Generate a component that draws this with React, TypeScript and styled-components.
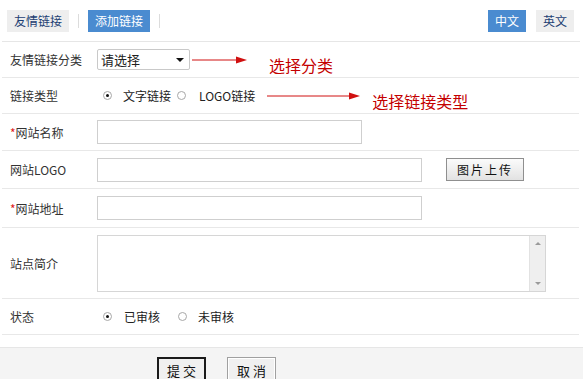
import React from 'react';
import styled, { createGlobalStyle } from 'styled-components';

const GlobalStyle = createGlobalStyle`
  html, body {
    margin: 0;
    padding: 0;
    background: #fff;
  }
  body {
    font-family: "Noto Sans CJK SC", "Liberation Sans", sans-serif;
    font-size: 12px;
    color: #333;
  }
`;

const Page = styled.div`
  width: 583px;
  height: 379px;
  overflow: hidden;
`;

const TopBar = styled.div`
  height: 41px;
  margin: 0 3px 0 2px;
  border-bottom: 1px solid #e6e6e6;
  display: flex;
  align-items: center;
  justify-content: space-between;
  padding: 0 5px;
`;

const TabGroup = styled.div`
  display: flex;
  align-items: center;
`;

const Tab = styled.div<{ $active?: boolean }>`
  height: 22px;
  line-height: 22px;
  padding: 0 7px;
  font-size: 12px;
  background: ${(p) => (p.$active ? '#4a8bd0' : '#eeeeee')};
  color: ${(p) => (p.$active ? '#fff' : '#1d3f73')};
`;

const Sep = styled.span`
  width: 1px;
  height: 14px;
  background: #dcdcdc;
  margin: 0 9px;
`;

const LangGroup = styled.div`
  display: flex;
  gap: 10px;
  margin-right: 1px;
`;

const Form = styled.div`
  margin: 0 4px 0 2px;
`;

const Row = styled.div<{ $h: number }>`
  height: ${(p) => p.$h}px;
  border-bottom: 1px solid #e8e8e8;
  display: flex;
  align-items: center;
`;

const Label = styled.div`
  width: 95px;
  padding-left: 8px;
  box-sizing: border-box;
  flex-shrink: 0;
  color: #333;
  white-space: nowrap;
`;

const Star = styled.span`
  color: #e02020;
`;

const FakeSelect = styled.div`
  width: 93px;
  height: 21px;
  box-sizing: border-box;
  border: 1px solid #c9c9c9;
  border-radius: 2px;
  display: flex;
  align-items: center;
  padding: 0 5px 0 3px;
  justify-content: space-between;
  color: #222;
  font-size: 13px;
`;

const Caret = styled.span`
  width: 0;
  height: 0;
  border-left: 4px solid transparent;
  border-right: 4px solid transparent;
  border-top: 4px solid #111;
`;

const Note = styled.span`
  color: #c40000;
  font-size: 16px;
  margin-top: 10px;
  white-space: nowrap;
`;

const Radio = styled.span<{ $on?: boolean }>`
  width: 9px;
  height: 9px;
  box-sizing: border-box;
  border: 1px solid #a8a8a8;
  border-radius: 50%;
  display: inline-flex;
  align-items: center;
  justify-content: center;
  background: #fff;
  flex-shrink: 0;
  &::after {
    content: '';
    width: 3px;
    height: 3px;
    border-radius: 50%;
    background: ${(p) => (p.$on ? '#111' : 'transparent')};
  }
`;

const RadioLabel = styled.label<{ $gap: number; $after: number }>`
  display: inline-flex;
  align-items: center;
  gap: ${(p) => p.$gap}px;
  margin-right: ${(p) => p.$after}px;
  color: #222;
`;

const RadioWrap = styled.div`
  display: flex;
  align-items: center;
  padding-left: 6px;
`;

const TextInput = styled.input<{ $w: number }>`
  width: ${(p) => p.$w}px;
  height: 24px;
  box-sizing: border-box;
  border: 1px solid #cfcfcf;
  outline: none;
  padding: 0 4px;
  font: inherit;
`;

const UploadBtn = styled.button`
  margin-left: 24px;
  width: 78px;
  height: 23px;
  box-sizing: border-box;
  border: 1px solid #8f8f8f;
  background: linear-gradient(#fbfbfb, #e2e2e2);
  font-family: "Noto Sans CJK SC", sans-serif;
  font-size: 12px;
  letter-spacing: 2px;
  color: #111;
  padding: 0;
`;

const AreaBox = styled.div`
  width: 449px;
  height: 57px;
  box-sizing: border-box;
  border: 1px solid #d6d6d6;
  display: flex;
`;

const Area = styled.textarea`
  flex: 1;
  border: none;
  outline: none;
  resize: none;
  font: inherit;
`;

const ScrollTrack = styled.div`
  width: 16px;
  background: #efefef;
  border-left: 1px solid #e2e2e2;
  display: flex;
  flex-direction: column;
  align-items: center;
  justify-content: space-between;
  padding: 6px 0;
  box-sizing: border-box;
`;

const ScrollArrow = styled.span<{ $up?: boolean }>`
  width: 0;
  height: 0;
  border-left: 3px solid transparent;
  border-right: 3px solid transparent;
  ${(p) => (p.$up ? 'border-bottom: 3px solid #9a9a9a;' : 'border-top: 3px solid #9a9a9a;')}
`;

const Footer = styled.div`
  margin-top: 12px;
  height: 40px;
  background: #f4f4f4;
  border-top: 1px solid #e6e6e6;
  display: flex;
  align-items: flex-start;
  padding: 9px 0 0 157px;
  gap: 21px;
`;

const ActionBtn = styled.button<{ $primary?: boolean }>`
  width: 49px;
  height: 26px;
  box-sizing: border-box;
  background: #f0f0f0;
  border: ${(p) => (p.$primary ? '2px solid #1a1a1a' : '1px solid #a0a0a0')};
  box-shadow: ${(p) => (p.$primary ? 'none' : 'inset 0 0 0 1px #fff')};
  font-family: "Noto Sans CJK SC", sans-serif;
  font-size: 13px;
  letter-spacing: 3px;
  padding: 0 0 0 3px;
  color: #111;
`;

const Arrow = ({ w, ml, mr }: { w: number; ml: number; mr: number }) => (
  <svg width={w} height={8} viewBox={`0 0 ${w} 8`} style={{ marginLeft: ml, marginRight: mr, flexShrink: 0 }}>
    <line x1={0} y1={4} x2={w - 10} y2={4} stroke="#d01010" strokeWidth={1} />
    <polygon points={`${w - 11},0.5 ${w},4 ${w - 11},7.5`} fill="#d01010" />
  </svg>
);

export default function App() {
  return (
    <Page>
      <GlobalStyle />
      <TopBar>
        <TabGroup>
          <Tab>友情链接</Tab>
          <Sep />
          <Tab $active>添加链接</Tab>
          <Sep />
        </TabGroup>
        <LangGroup>
          <Tab $active>中文</Tab>
          <Tab>英文</Tab>
        </LangGroup>
      </TopBar>
      <Form>
        <Row $h={35}>
          <Label>友情链接分类</Label>
          <FakeSelect>
            请选择
            <Caret />
          </FakeSelect>
          <Arrow w={55} ml={2} mr={22} />
          <Note>选择分类</Note>
        </Row>
        <Row $h={35}>
          <Label>链接类型</Label>
          <RadioWrap>
            <RadioLabel $gap={11} $after={6}>
              <Radio $on />
              文字链接
            </RadioLabel>
            <RadioLabel $gap={13} $after={12}>
              <Radio />
              LOGO链接
            </RadioLabel>
          </RadioWrap>
          <Arrow w={93} ml={0} mr={12} />
          <Note>选择链接类型</Note>
        </Row>
        <Row $h={36}>
          <Label>
            <Star>*</Star>网站名称
          </Label>
          <TextInput $w={265} />
        </Row>
        <Row $h={37}>
          <Label>网站LOGO</Label>
          <TextInput $w={325} />
          <UploadBtn>图片上传</UploadBtn>
        </Row>
        <Row $h={38}>
          <Label>
            <Star>*</Star>网站地址
          </Label>
          <TextInput $w={325} />
        </Row>
        <Row $h={70}>
          <Label>站点简介</Label>
          <AreaBox>
            <Area />
            <ScrollTrack>
              <ScrollArrow $up />
              <ScrollArrow />
            </ScrollTrack>
          </AreaBox>
        </Row>
        <Row $h={35}>
          <Label>状态</Label>
          <RadioWrap>
            <RadioLabel $gap={12} $after={18}>
              <Radio $on />
              已审核
            </RadioLabel>
            <RadioLabel $gap={11} $after={0}>
              <Radio />
              未审核
            </RadioLabel>
          </RadioWrap>
        </Row>
      </Form>
      <Footer>
        <ActionBtn $primary>提交</ActionBtn>
        <ActionBtn>取消</ActionBtn>
      </Footer>
    </Page>
  );
}
